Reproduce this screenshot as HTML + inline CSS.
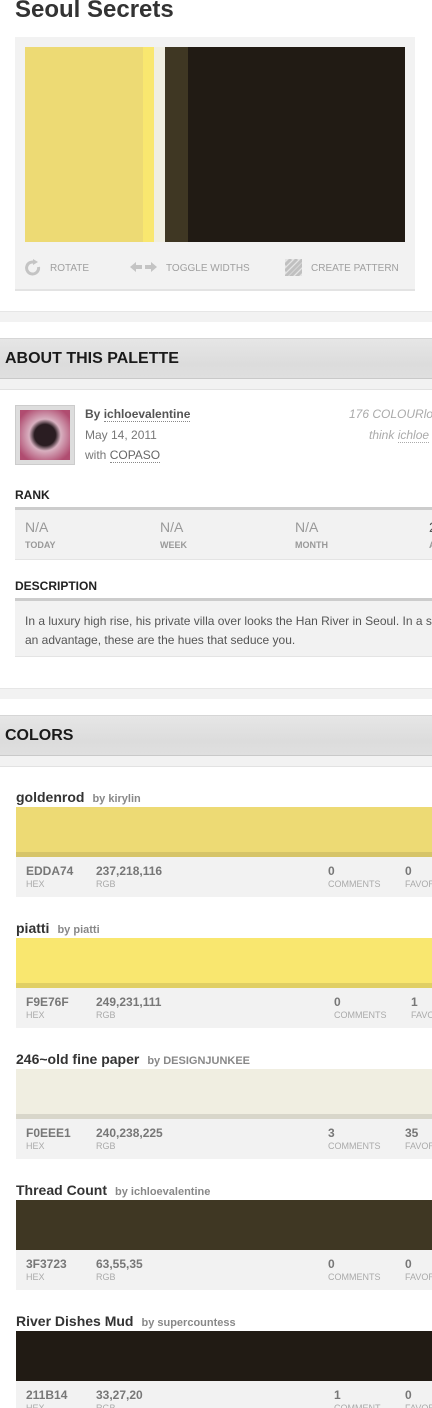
<!DOCTYPE html>
<html><head><meta charset="utf-8"><style>
*{margin:0;padding:0;box-sizing:border-box}
html{overflow:hidden}
body{width:432px;height:1408px;overflow:hidden;background:#fff;font-family:"Liberation Sans",Arial,sans-serif;position:relative}
.a{position:absolute;white-space:nowrap}
.hdr{position:absolute;left:0;width:432px;height:52px;background:linear-gradient(#e6e6e6,#dcdcdc 50%,#e2e2e2);border-top:1px solid #d6d6d6;overflow:hidden}
.hdr .b{position:absolute;left:0;top:39px;width:432px;height:12px;background:#f2f2f2;border-top:1px solid #c9c9c9;border-bottom:1px solid #e2e2e2}
.hdr span{position:absolute;left:5px;top:11px;font-size:16px;font-weight:bold;color:#1a1a1a}
.band{position:absolute;left:0;width:432px;height:11px;background:#f2f2f2;border-top:1px solid #e6e6e6}
.ct{font-size:14px;font-weight:bold;color:#333}
.ct small{font-size:11px;color:#888;margin-left:8px}
.sw{position:absolute;left:16px;width:416px;height:50px}
.inf{position:absolute;left:16px;width:416px;height:40px;background:#f2f2f2;overflow:hidden}
.v{position:absolute;top:7px;font-size:12px;font-weight:bold;color:#777}
.l{position:absolute;top:22px;font-size:9px;color:#aaa}
.lab{font-size:12px;font-weight:bold;color:#222}
</style></head><body>
<div class="a" style="left:15px;top:-4px;font-size:24px;font-weight:bold;color:#333">Seoul Secrets</div>
<div class="a" style="left:15px;top:37px;width:400px;height:254px;background:#f2f2f2;border-bottom:2px solid #e3e3e3"></div>
<div class="a" style="left:25px;top:47px;width:118px;height:195px;background:#EDDA74"></div>
<div class="a" style="left:143px;top:47px;width:11px;height:195px;background:#F9E76F"></div>
<div class="a" style="left:154px;top:47px;width:11px;height:195px;background:#F0EEE1"></div>
<div class="a" style="left:165px;top:47px;width:23px;height:195px;background:#3F3723"></div>
<div class="a" style="left:188px;top:47px;width:217px;height:195px;background:#211B14"></div>
<svg class="a" style="left:25px;top:259px" width="16" height="17" viewBox="0 0 16 17"><path d="M10 3.5A6 6 0 1 0 13.5 8" fill="none" stroke="#c4c4c4" stroke-width="3"/><path d="M8 0l5 3-5 3z" fill="#c4c4c4"/></svg>
<div class="a" style="left:50px;top:263px;font-size:10px;color:#a0a0a0">ROTATE</div>
<svg class="a" style="left:130px;top:261px" width="27" height="12" viewBox="0 0 27 12"><path d="M0 6l6-5v3h6v4H6v3z M27 6l-6-5v3h-6v4h6v3z" fill="#c4c4c4"/></svg>
<div class="a" style="left:166px;top:263px;font-size:10px;color:#a0a0a0">TOGGLE WIDTHS</div>
<svg class="a" style="left:285px;top:259px" width="17" height="17" viewBox="0 0 17 17"><rect width="17" height="17" fill="#e4e4e4"/><path d="M0 6L6 0M0 12L12 0M0 18L18 0M5 18L18 5M11 18L18 11" stroke="#c0c0c0" stroke-width="3"/></svg>
<div class="a" style="left:311px;top:263px;font-size:10px;color:#a0a0a0">CREATE PATTERN</div>
<div class="band" style="top:311px"></div>
<div class="hdr" style="top:338px"><span>ABOUT THIS PALETTE</span><div class="b"></div></div>
<div class="a" style="left:15px;top:405px;width:60px;height:60px;background:#ddd;border:1px solid #ccc;padding:4px"><div style="width:50px;height:50px;background:radial-gradient(circle at 50% 50%,#2a1d22 0 30%,#d8b0c0 45%,#b04c70 85%);"></div></div>
<div class="a" style="left:85px;top:407px;font-size:12px;color:#555;font-weight:bold">By <span style="border-bottom:1px dotted #888">ichloevalentine</span></div>
<div class="a" style="left:85px;top:428px;font-size:12px;color:#777">May 14, 2011</div>
<div class="a" style="left:85px;top:448px;font-size:12px;color:#777">with <span style="border-bottom:1px dotted #888;color:#666">COPASO</span></div>
<div class="a" style="left:349px;top:407px;font-size:12px;color:#aaa;font-style:italic">176 COLOURlo</div>
<div class="a" style="left:369px;top:428px;font-size:12px;color:#aaa;font-style:italic">think <span style="border-bottom:1px dotted #aaa">ichloe</span></div>
<div class="a lab" style="left:15px;top:488px">RANK</div>
<div class="a" style="left:15px;top:507px;width:417px;height:53px;background:#f2f2f2;border-top:3px solid #ccc;border-bottom:1px solid #e4e4e4"></div>
<div class="a" style="left:25px;top:519px;font-size:14px;color:#999">N/A</div>
<div class="a" style="left:160px;top:519px;font-size:14px;color:#999">N/A</div>
<div class="a" style="left:295px;top:519px;font-size:14px;color:#999">N/A</div>
<div class="a" style="left:429px;top:519px;font-size:14px;color:#555">2</div>
<div class="a" style="left:25px;top:540px;font-size:9px;font-weight:bold;color:#999">TODAY</div>
<div class="a" style="left:160px;top:540px;font-size:9px;font-weight:bold;color:#999">WEEK</div>
<div class="a" style="left:295px;top:540px;font-size:9px;font-weight:bold;color:#999">MONTH</div>
<div class="a" style="left:429px;top:540px;font-size:9px;font-weight:bold;color:#999">A</div>
<div class="a lab" style="left:15px;top:579px">DESCRIPTION</div>
<div class="a" style="left:15px;top:598px;width:417px;height:59px;background:#f2f2f2;border-top:3px solid #ccc;border-bottom:1px solid #e4e4e4"></div>
<div class="a" style="left:25px;top:614px;font-size:12px;color:#555;width:407px;overflow:hidden">In a luxury high rise, his private villa over looks the Han River in Seoul. In a s</div>
<div class="a" style="left:25px;top:633px;font-size:12px;color:#555">an advantage, these are the hues that seduce you.</div>
<div class="band" style="top:688px"></div>
<div class="hdr" style="top:715px"><span>COLORS</span><div class="b"></div></div>

<div class="a ct" style="left:16px;top:789px">goldenrod<small>by kirylin</small></div>
<div class="sw" style="top:807px;background:#EDDA74;border-bottom:5px solid #d6c468;height:50px"></div>
<div class="inf" style="top:857px"><div class="v" style="left:10px">EDDA74</div><div class="l" style="left:10px">HEX</div><div class="v" style="left:80px">237,218,116</div><div class="l" style="left:80px">RGB</div><div class="v" style="left:312px">0</div><div class="l" style="left:312px">COMMENTS</div><div class="v" style="left:389px">0</div><div class="l" style="left:389px">FAVORITES</div></div>

<div class="a ct" style="left:16px;top:920px">piatti<small>by piatti</small></div>
<div class="sw" style="top:938px;background:#F9E76F;border-bottom:5px solid #e0cf63;height:50px"></div>
<div class="inf" style="top:988px"><div class="v" style="left:10px">F9E76F</div><div class="l" style="left:10px">HEX</div><div class="v" style="left:80px">249,231,111</div><div class="l" style="left:80px">RGB</div><div class="v" style="left:318px">0</div><div class="l" style="left:318px">COMMENTS</div><div class="v" style="left:395px">1</div><div class="l" style="left:395px">FAVORITES</div></div>

<div class="a ct" style="left:16px;top:1051px">246~old fine paper<small>by DESIGNJUNKEE</small></div>
<div class="sw" style="top:1069px;background:#F0EEE1;border-bottom:5px solid #d8d6ca;height:50px"></div>
<div class="inf" style="top:1119px"><div class="v" style="left:10px">F0EEE1</div><div class="l" style="left:10px">HEX</div><div class="v" style="left:80px">240,238,225</div><div class="l" style="left:80px">RGB</div><div class="v" style="left:312px">3</div><div class="l" style="left:312px">COMMENTS</div><div class="v" style="left:389px">35</div><div class="l" style="left:389px">FAVORITES</div></div>

<div class="a ct" style="left:16px;top:1182px">Thread Count<small>by ichloevalentine</small></div>
<div class="sw" style="top:1200px;background:#3F3723"></div>
<div class="inf" style="top:1250px"><div class="v" style="left:10px">3F3723</div><div class="l" style="left:10px">HEX</div><div class="v" style="left:80px">63,55,35</div><div class="l" style="left:80px">RGB</div><div class="v" style="left:312px">0</div><div class="l" style="left:312px">COMMENTS</div><div class="v" style="left:389px">0</div><div class="l" style="left:389px">FAVORITES</div></div>

<div class="a ct" style="left:16px;top:1313px">River Dishes Mud<small>by supercountess</small></div>
<div class="sw" style="top:1331px;background:#211B14"></div>
<div class="inf" style="top:1381px"><div class="v" style="left:10px">211B14</div><div class="l" style="left:10px">HEX</div><div class="v" style="left:80px">33,27,20</div><div class="l" style="left:80px">RGB</div><div class="v" style="left:318px">1</div><div class="l" style="left:318px">COMMENT</div><div class="v" style="left:389px">0</div><div class="l" style="left:389px">FAVORITES</div></div>
</body></html>
